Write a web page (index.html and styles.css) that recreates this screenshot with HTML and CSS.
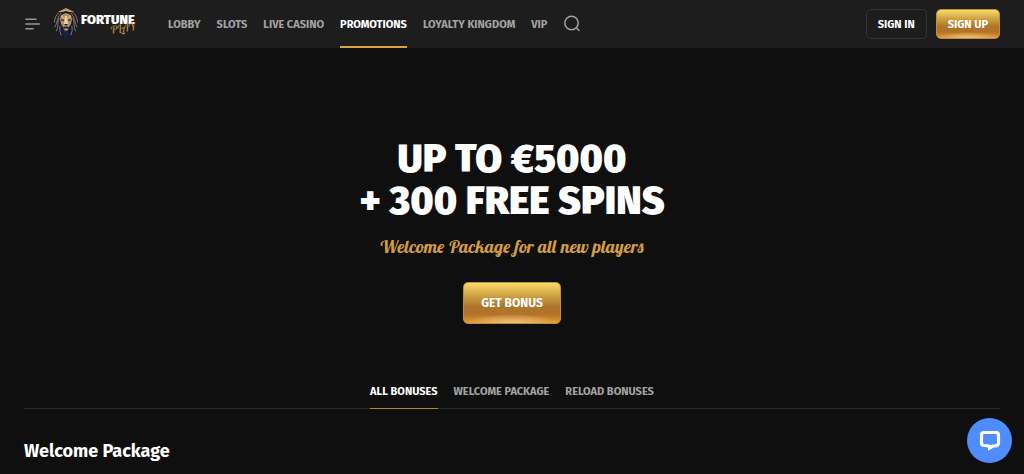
FILE: index.html
```html
<!DOCTYPE html>
<html lang="en">
<head>
<meta charset="utf-8">
<meta name="viewport" content="width=device-width, initial-scale=1">
<title>Fortune Play – Promotions</title>
<link rel="stylesheet" href="styles.css">
</head>
<body>
<header class="header">
  <button class="icon-button" type="button" aria-label="Menu">
    <svg width="16" height="12" viewBox="0 0 16 12" fill="none" stroke="#969998" stroke-width="1.6" stroke-linecap="round"><path d="M2 1.2H12M2 6H15.2M2 10.8H9"/></svg>
  </button>
  <a class="logo" href="#" aria-label="Fortune Play">
    <svg width="84" height="34" viewBox="0 0 84 34">
      <path fill="#111a38" d="M13 2L6 4L2 11L1 19L4 25L8 29L13 33L18 29L22 25L25 19L24 11L20 4Z"/>
      <g fill="none" stroke="#b18a58" stroke-width=".8" stroke-linecap="round">
        <path d="M11 3C5 4 2 9 1.500 15M15 3C21 4 24 9 24.500 15M8 6C4 10 5 14 2 20M18 6C22 10 21 14 24 20M6 11C4 16 6 19 3.500 24M20 11C22 16 20 19 22.500 24M7 19Q6 24 8 28M19 19Q20 24 18 28"/>
      </g>
      <path fill="#c49c68" d="M13 1L9 3L5 5L10 5L13 4L16 5L21 5L17 3Z"/>
      <path fill="#b98f5b" d="M13 6L8 8L7 12L8 17L10 20L11 23L13 24L15 23L16 20L18 17L19 12L18 8Z"/>
      <path fill="#ecd0a0" d="M12 9H14L15 17L13 19L11 17ZM8 9L11 10L9 11ZM18 9L15 10L17 11Z"/>
      <path fill="#182041" d="M8 12L11 13L11 14L8.500 13.500ZM18 12L15 13L15 14L17.500 13.500ZM11 17H15L13 19ZM10 20L13 19.500L16 20L15 22L13 21L11 22ZM10 24H16L15 30L13 32L11 30Z"/>
      <text class="logo-name" x="28" y="17">FORTUNE</text>
      <text class="logo-play" x="58" y="27" transform="rotate(-9 58 27)">PLAY</text>
    </svg>
  </a>
  <nav class="nav" aria-label="Main">
    <a class="nav-link" href="#">LOBBY</a>
    <a class="nav-link" href="#">SLOTS</a>
    <a class="nav-link" href="#">LIVE CASINO</a>
    <a class="nav-link nav-link-active" href="#" aria-current="page">PROMOTIONS</a>
    <a class="nav-link" href="#">LOYALTY KINGDOM</a>
    <a class="nav-link" href="#">VIP</a>
    <button class="icon-button" type="button" aria-label="Search">
      <svg width="18" height="18" viewBox="0 0 18 18" fill="none" stroke="#a1a1a1" stroke-width="1.500" stroke-linecap="round"><circle cx="8.500" cy="8" r="6.700"/><path d="M13.300 12.800L16 15.500"/></svg>
    </button>
  </nav>
  <div class="account">
    <button class="button button-outline" type="button">SIGN IN</button>
    <button class="button button-gold" type="button">SIGN UP</button>
  </div>
</header>
<main>
  <section class="hero">
    <h1 class="hero-title">UP TO €5000<br>+ 300 FREE SPINS</h1>
    <p class="hero-text">Welcome Package for all new players</p>
    <button class="button button-gold button-large" type="button">GET BONUS</button>
  </section>
  <section class="bonuses">
    <nav class="tabs" aria-label="Bonuses">
      <a class="tab tab-active" href="#" aria-current="true">ALL BONUSES</a>
      <a class="tab" href="#">WELCOME PACKAGE</a>
      <a class="tab" href="#">RELOAD BONUSES</a>
    </nav>
    <h2 class="section-title">Welcome Package</h2>
  </section>
</main>
<button class="chat" type="button" aria-label="Open chat">
  <svg width="22" height="22" viewBox="0 0 22 22"><path fill="none" stroke="#fff" stroke-width="3.200" stroke-linejoin="round" d="M5 2.500H17Q19.500 2.500 19.500 5V13Q19.500 15.500 16.500 15.800L14 16L10.500 18V16L5 15.500Q2.500 15.200 2.500 13V5Q2.500 2.500 5 2.500Z"/><path fill="#fff" d="M9 15H15L9 21Z"/></svg>
</button>
</body>
</html>
```
FILE: styles.css
```css
* { box-sizing: border-box; }
body {
  margin: 0;
  background: #0f0f0f;
  color: #fff;
  font-family: "Fira Sans", "Open Sans", "Noto Sans", sans-serif;
}
a { color: inherit; text-decoration: none; }
button { font: inherit; color: inherit; cursor: pointer; }
.header {
  display: flex;
  align-items: center;
  height: 48px;
  padding: 0 24px;
  background: #1d1d1d;
}
.icon-button { display: flex; padding: 0; border: 0; background: none; }
.logo { display: flex; margin-left: 13px; }
.logo-name { font-family: "Fira Sans", Roboto, sans-serif; font-size: 13px; font-weight: 900; fill: #fff; }
.logo-play { font-family: "Lobster Two", "Liberation Serif", serif; font-size: 11px; font-style: italic; font-weight: 400; fill: #b68b49; }
.nav {
  display: flex;
  align-items: center;
  gap: 16px;
  height: 100%;
  margin-left: 31px;
  font-size: 11px;
  font-weight: 700;
  white-space: nowrap;
}
.nav-link {
  display: flex;
  align-items: center;
  height: 100%;
  border-top: 2px solid transparent;
  border-bottom: 2px solid transparent;
  color: #a3a3a3;
}
.nav-link-active { color: #fff; border-bottom-color: #dda23c; }
.account { display: flex; gap: 9px; margin-left: auto; }
.button {
  height: 30px;
  padding: 0 11px;
  border: 1px solid #333;
  border-radius: 5px;
  background: none;
  font-size: 11px;
  font-weight: 700;
  white-space: nowrap;
}
.button-gold {
  border-color: #c38d36;
  background:
    radial-gradient(ellipse 50% 22% at 50% 100%, #edc283, transparent),
    linear-gradient(#f8dc68, #d0a444 30%, #ae762c 58%, #b2722a 78%, #e29a31);
}
.hero {
  display: flex;
  flex-direction: column;
  align-items: center;
  padding: 90px 24px 61px;
  text-align: center;
}
.hero-title { margin: 0; font-size: 39px; line-height: 42px; font-weight: 900; }
.hero-text {
  margin: 12px 0 22px;
  color: #d29c43;
  font-family: "Lobster Two", "Liberation Serif", serif;
  font-size: 18px;
  font-style: italic;
  font-weight: 700;
  line-height: 26px;
}
.button-large { height: 42px; padding: 0 17px; font-size: 12px; }
.bonuses { padding: 0 24px; }
.tabs {
  display: flex;
  justify-content: center;
  gap: 16px;
  border-bottom: 1px solid #2a2a2a;
  font-size: 11px;
  font-weight: 700;
  line-height: 14px;
}
.tab {
  margin-bottom: -1px;
  padding-bottom: 9px;
  border-bottom: 1px solid transparent;
  color: #a3a3a3;
}
.tab-active { color: #fff; border-color: #b9842e; }
.section-title { margin: 29px 0 0; font-size: 18px; line-height: 26px; font-weight: 700; }
.chat {
  position: fixed;
  right: 12px;
  bottom: 11px;
  display: flex;
  align-items: center;
  justify-content: center;
  width: 45px;
  height: 45px;
  padding: 0;
  border: 0;
  border-radius: 50%;
  background: #4f8cff;
}
```
